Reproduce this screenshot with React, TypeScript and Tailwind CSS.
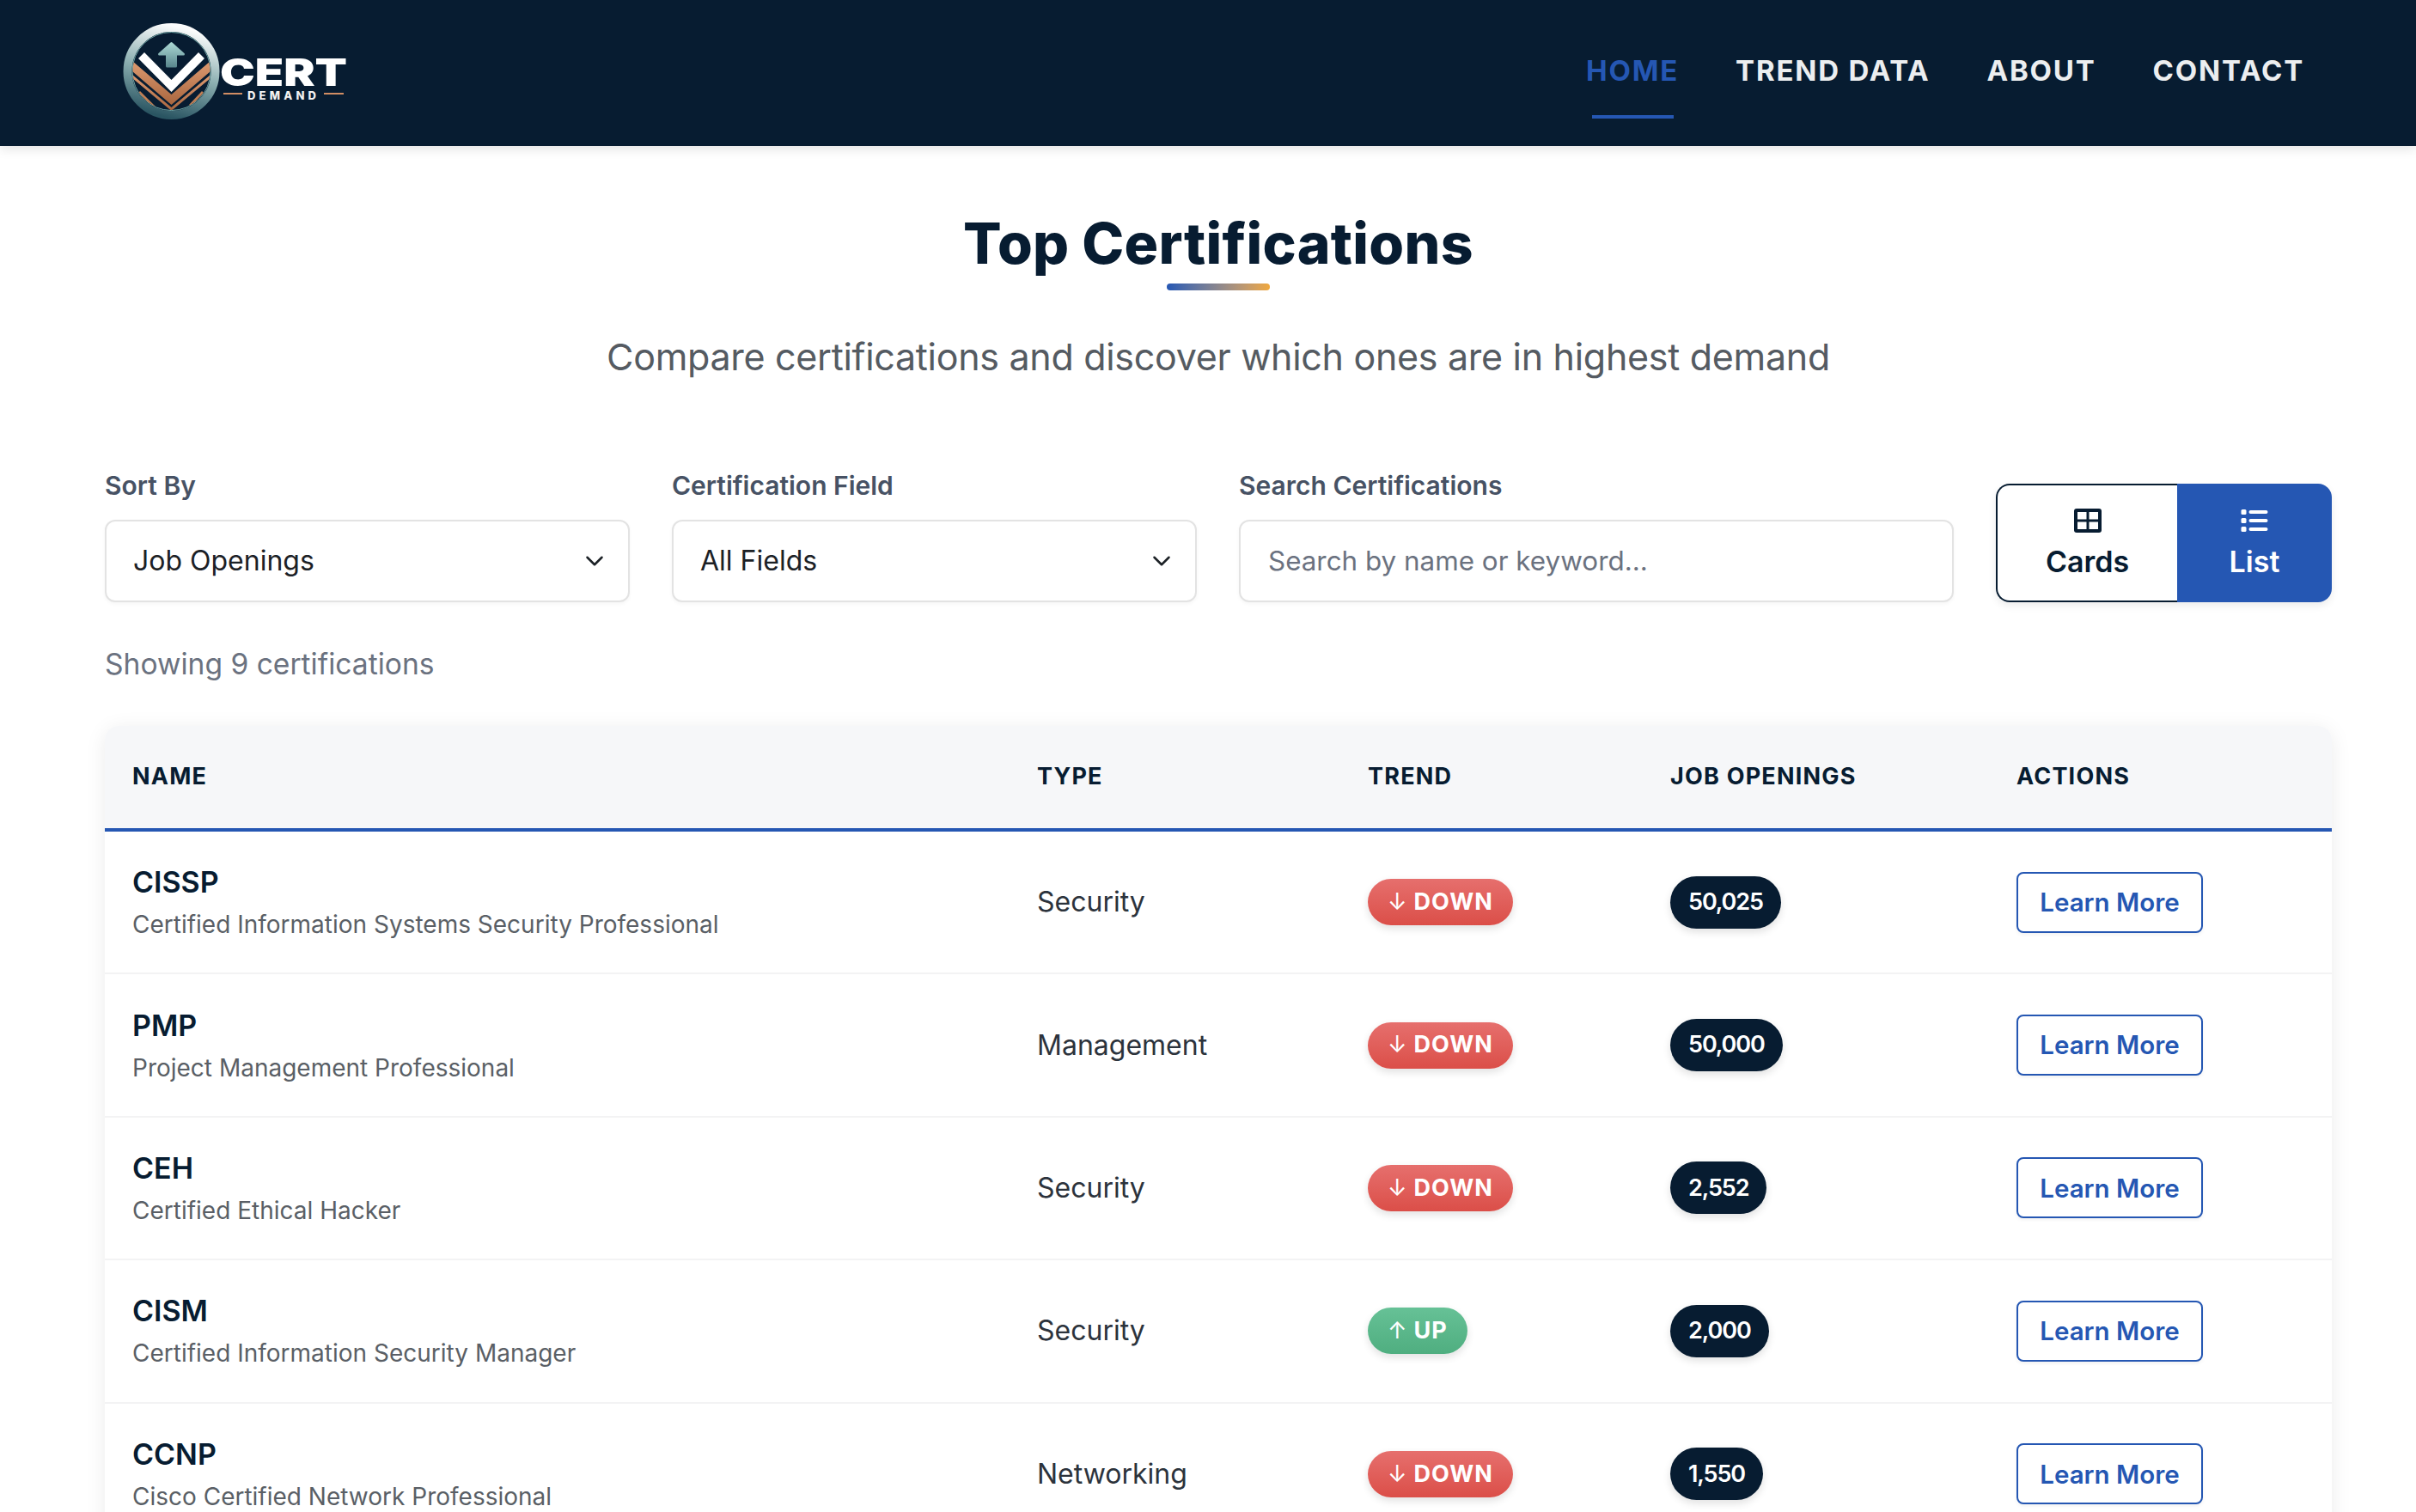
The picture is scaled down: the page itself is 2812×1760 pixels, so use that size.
import { ChevronDown } from "lucide-react";

type Cert = {
  code: string;
  name: string;
  type: string;
  trend: "up" | "down";
  openings: string;
};

const CERTS: Cert[] = [
  { code: "CISSP", name: "Certified Information Systems Security Professional", type: "Security", trend: "down", openings: "50,025" },
  { code: "PMP", name: "Project Management Professional", type: "Management", trend: "down", openings: "50,000" },
  { code: "CEH", name: "Certified Ethical Hacker", type: "Security", trend: "down", openings: "2,552" },
  { code: "CISM", name: "Certified Information Security Manager", type: "Security", trend: "up", openings: "2,000" },
  { code: "CCNP", name: "Cisco Certified Network Professional", type: "Networking", trend: "down", openings: "1,550" },
];

function Logo() {
  return (
    <svg width="340" height="170" viewBox="0 0 340 170" className="block">
      <defs>
        <linearGradient id="ring" x1="0.6" y1="0" x2="0.35" y2="1">
          <stop offset="0" stopColor="#fbfcfc" />
          <stop offset="0.5" stopColor="#8db0b2" />
          <stop offset="1" stopColor="#2a5562" />
        </linearGradient>
        <linearGradient id="arrow" x1="0" y1="0" x2="0" y2="1">
          <stop offset="0" stopColor="#a9d6d2" />
          <stop offset="1" stopColor="#5c8a90" />
        </linearGradient>
        <linearGradient id="copper" x1="0" y1="0" x2="0" y2="1">
          <stop offset="0" stopColor="#dd9a70" />
          <stop offset="1" stopColor="#a9663f" />
        </linearGradient>
        <clipPath id="inner">
          <circle cx="99.5" cy="83" r="45" />
        </clipPath>
      </defs>
      <circle cx="99.5" cy="83" r="51" fill="#071c31" stroke="url(#ring)" strokeWidth="10" />
      <circle cx="99.5" cy="83" r="45.5" fill="none" stroke="#6fa5a5" strokeWidth="1" />
      <g clipPath="url(#inner)">
        <path d="M54 71 L99.5 110 L145 71 L145 83 L99.5 122 L54 83 Z" fill="url(#copper)" />
        <path d="M54 87 L99.5 125 L145 87 L145 91 L99.5 129 L54 91 Z" fill="url(#copper)" />
        <path d="M63 106 L81 124 L79 126 L61 108 Z" fill="#c07f55" />
        <path d="M135 106 L120 122 L122 124 L137 108 Z" fill="#c07f55" />
      </g>
      <path d="M61 68 L68 61 L99.5 93 L131 61 L138 68 L99.5 107 Z" fill="#ffffff" />
      <path
        d="M99.5 50.5 L85.5 63 L94.5 63 L94.5 77 L104.5 77 L104.5 63 L113.5 63 Z"
        fill="url(#arrow)"
        stroke="url(#arrow)"
        strokeWidth="3"
        strokeLinejoin="round"
      />
      <text x="156" y="100" fill="#ffffff" fontFamily="Inter, sans-serif" fontWeight="900" fontSize="44" textLength="148" lengthAdjust="spacingAndGlyphs">
        CERT
      </text>
      <text x="188" y="116" fill="#f2f2f2" fontFamily="Inter, sans-serif" fontWeight="800" fontSize="13" textLength="80" lengthAdjust="spacing">
        DEMAND
      </text>
      <rect x="160" y="108" width="22" height="2" fill="#d18d63" />
      <rect x="277" y="108" width="23" height="2" fill="#d18d63" />
    </svg>
  );
}

function Header() {
  return (
    <header className="relative flex h-[170px] items-center justify-between bg-[#071c31] pl-[100px] pr-[130px] shadow-[0_4px_12px_rgba(0,0,0,0.1)]">
      <Logo />
      <nav className="-mt-[6px] flex items-center gap-[66px] text-[33px] font-bold leading-[40px] tracking-[1.8px] text-[#eceef0]">
        <a className="relative text-[#2557b3]">
          HOME
          <span className="absolute left-[7px] top-[72px] h-[4px] w-[95px] bg-[#2557b3]" />
        </a>
        <a>TREND DATA</a>
        <a>ABOUT</a>
        <a>CONTACT</a>
      </nav>
    </header>
  );
}

function SelectField({ label, value }: { label: string; value: string }) {
  return (
    <div className="w-[611px]">
      <label className="mb-[22px] block text-[30px] font-semibold leading-[36px] text-[#475264]">{label}</label>
      <div className="relative">
        <select className="h-[96px] w-full appearance-none rounded-[12px] border-2 border-[#e3e3e3] bg-white px-[31px] text-[32px] text-[#1c2126] shadow-[0_2px_4px_rgba(0,0,0,0.04)]">
          <option>{value}</option>
        </select>
        <ChevronDown size={34} strokeWidth={1.8} className="absolute right-[24px] top-[31px] text-[#1c2126]" />
      </div>
    </div>
  );
}

function GridIcon() {
  return (
    <svg width="32" height="28" viewBox="0 0 32 28" className="block">
      <rect width="32" height="28" rx="3" fill="#071c31" />
      <rect x="4" y="4" width="10.5" height="8.5" fill="#ffffff" />
      <rect x="17.5" y="4" width="10.5" height="8.5" fill="#ffffff" />
      <rect x="4" y="15.5" width="10.5" height="8.5" fill="#ffffff" />
      <rect x="17.5" y="15.5" width="10.5" height="8.5" fill="#ffffff" />
    </svg>
  );
}

function ListIcon() {
  return (
    <svg width="32" height="28" viewBox="0 0 32 28" className="block" fill="#ffffff">
      <rect x="0.5" y="1" width="6" height="6" rx="1.5" />
      <rect x="0.5" y="11" width="6" height="6" rx="1.5" />
      <rect x="0.5" y="21" width="6" height="6" rx="1.5" />
      <rect x="9.5" y="2" width="22" height="4" rx="2" />
      <rect x="9.5" y="12" width="22" height="4" rx="2" />
      <rect x="9.5" y="22" width="22" height="4" rx="2" />
    </svg>
  );
}

function Filters() {
  return (
    <div className="mt-[102px] flex items-end gap-[49px]">
      <SelectField label="Sort By" value="Job Openings" />
      <SelectField label="Certification Field" value="All Fields" />
      <div className="w-[832px]">
        <label className="mb-[22px] block text-[30px] font-semibold leading-[36px] text-[#475264]">Search Certifications</label>
        <input
          placeholder="Search by name or keyword..."
          className="h-[96px] w-full rounded-[12px] border-2 border-[#e3e3e3] bg-white px-[32px] text-[31.4px] text-[#1c2126] shadow-[0_2px_4px_rgba(0,0,0,0.04)] placeholder:text-[#6b7280]"
        />
      </div>
      <div className="flex h-[138px] w-[391px] rounded-[16px] shadow-[0_4px_10px_rgba(0,0,0,0.08)]">
        <button className="flex w-[211px] flex-col items-center justify-center gap-[12px] rounded-l-[16px] border-2 border-r-0 border-[#071c31] bg-white pt-[4px] text-[34px] font-semibold leading-[44px] text-[#071c31]">
          <GridIcon />
          Cards
        </button>
        <button className="flex w-[180px] flex-col items-center justify-center gap-[12px] rounded-r-[16px] bg-[#2557b3] pt-[4px] text-[34px] font-semibold leading-[44px] text-white">
          <ListIcon />
          List
        </button>
      </div>
    </div>
  );
}

function TrendBadge({ trend }: { trend: Cert["trend"] }) {
  const down = trend === "down";
  return (
    <span
      className={`inline-flex h-[54px] items-center gap-[7px] rounded-full px-[23px] text-[27px] font-bold tracking-[1px] text-white shadow-[0_4px_10px_rgba(0,0,0,0.12)] ${
        down ? "bg-gradient-to-b from-[#e66f6d] to-[#db4e48]" : "bg-gradient-to-b from-[#66c196] to-[#4fae80]"
      }`}
    >
      <span className="font-normal">{down ? "↓" : "↑"}</span>
      {down ? "DOWN" : "UP"}
    </span>
  );
}

function CertRow({ cert }: { cert: Cert }) {
  return (
    <tr className="h-[166.4px]">
      <td className="border-b-2 border-[#f3f3f4] pl-[32px]">
        <div className="text-[34px] font-semibold leading-[42px] text-[#071c31]">{cert.code}</div>
        <div className="mt-[10px] text-[28px] leading-[36px] text-[#5a5f66]">{cert.name}</div>
      </td>
      <td className="border-b-2 border-[#f3f3f4] pl-[32px] text-[32px] text-[#2c333c]">{cert.type}</td>
      <td className="border-b-2 border-[#f3f3f4] pl-[32px]">
        <TrendBadge trend={cert.trend} />
      </td>
      <td className="border-b-2 border-[#f3f3f4] pl-[32px]">
        <span className="inline-flex h-[61px] items-center rounded-full bg-[#071c31] px-[21px] text-[27px] font-semibold tracking-[-1.1px] text-white shadow-[0_4px_10px_rgba(0,0,0,0.12)]">
          {cert.openings}
        </span>
      </td>
      <td className="border-b-2 border-[#f3f3f4] pl-[32px]">
        <button className="h-[71px] w-[217px] rounded-[8px] border-2 border-[#2557b3] bg-white text-[29.5px] font-semibold text-[#2557b3] shadow-[0_2px_4px_rgba(0,0,0,0.06)]">
          Learn More
        </button>
      </td>
    </tr>
  );
}

export default function App() {
  return (
    <div className="h-[1760px] overflow-hidden bg-white font-['Inter',sans-serif]">
      <Header />
      <main className="pl-[122px] pr-[98px]">
        <div className="flex flex-col items-center pt-[73px]">
          <h1 className="text-[66px] font-extrabold leading-[80px] tracking-[0.3px] text-[#071c31]">Top Certifications</h1>
          <div className="mt-[7px] h-[8px] w-[120px] rounded-full bg-gradient-to-r from-[#2557b3] to-[#f0a83a]" />
          <p className="mt-[47px] text-[43px] leading-[60px] tracking-[-0.3px] text-[#555b62]">
            Compare certifications and discover which ones are in highest demand
          </p>
        </div>
        <Filters />
        <p className="mt-[50px] text-[33.6px] leading-[44px] text-[#6b7280]">Showing 9 certifications</p>
        <div className="mt-[50px] overflow-hidden rounded-[16px] bg-white shadow-[0_4px_24px_rgba(0,0,0,0.08)]">
          <table className="w-full table-fixed border-separate border-spacing-0 text-left">
            <colgroup>
              <col className="w-[1053px]" />
              <col className="w-[385px]" />
              <col className="w-[352px]" />
              <col className="w-[403px]" />
              <col />
            </colgroup>
            <thead>
              <tr className="h-[123px] bg-[#f6f7f9] text-[27px] font-bold tracking-[1.2px] text-[#071c31]">
                <th className="border-b-4 border-[#2557b3] pl-[32px] font-bold">NAME</th>
                <th className="border-b-4 border-[#2557b3] pl-[32px] font-bold">TYPE</th>
                <th className="border-b-4 border-[#2557b3] pl-[32px] font-bold">TREND</th>
                <th className="border-b-4 border-[#2557b3] pl-[32px] font-bold">JOB OPENINGS</th>
                <th className="border-b-4 border-[#2557b3] pl-[32px] font-bold">ACTIONS</th>
              </tr>
            </thead>
            <tbody>
              {CERTS.map((c) => (
                <CertRow key={c.code} cert={c} />
              ))}
            </tbody>
          </table>
        </div>
      </main>
    </div>
  );
}
